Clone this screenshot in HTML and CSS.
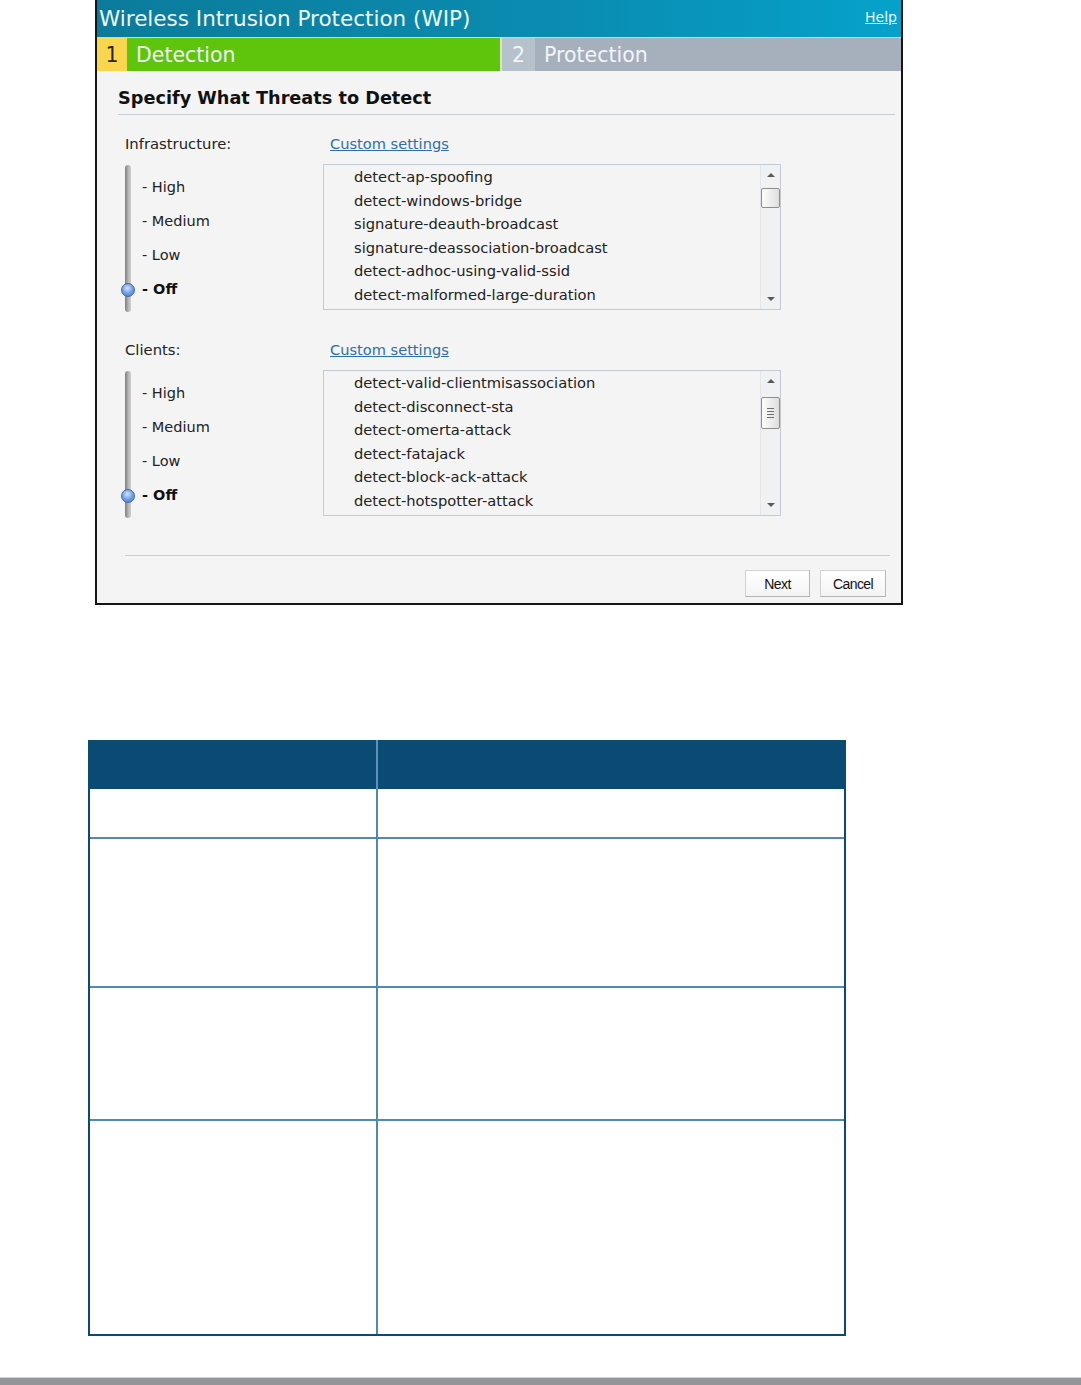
FILE: index.html
```html
<!DOCTYPE html>
<html lang="en">
<head>
    <meta charset="UTF-8">
    <title>Wireless Intrusion Protection (WIP)</title>
    <link rel="stylesheet" href="styles.css">
</head>
<body>
    <div class="dialog">
        <div class="titleBar">
            <span class="title">Wireless Intrusion Protection (WIP)</span>
            <a class="help" href="#">Help</a>
        </div>
        <div class="steps">
            <div class="step current"><span class="num">1</span><span class="name">Detection</span></div>
            <div class="step"><span class="num">2</span><span class="name">Protection</span></div>
        </div>
        <div class="content">
            <h2>Specify What Threats to Detect</h2>

            <div class="group">
                <div class="groupLabel">Infrastructure:</div>
                <div class="linkCell"><a class="custom" href="#">Custom settings</a></div>
                <div class="slider">
                    <div class="track"><span class="knob"></span></div>
                    <ul class="levels">
                        <li>- High</li>
                        <li>- Medium</li>
                        <li>- Low</li>
                        <li class="sel">- Off</li>
                    </ul>
                </div>
                <div class="listBox">
                    <ul class="items">
                        <li>detect-ap-spoofing</li>
                        <li>detect-windows-bridge</li>
                        <li>signature-deauth-broadcast</li>
                        <li>signature-deassociation-broadcast</li>
                        <li>detect-adhoc-using-valid-ssid</li>
                        <li>detect-malformed-large-duration</li>
                    </ul>
                    <div class="scroll">
                        <span class="arrow up"></span>
                        <div class="scrollTrack"><span class="thumb small"></span></div>
                        <span class="arrow down"></span>
                    </div>
                </div>
            </div>

            <div class="group second">
                <div class="groupLabel">Clients:</div>
                <div class="linkCell"><a class="custom" href="#">Custom settings</a></div>
                <div class="slider">
                    <div class="track"><span class="knob"></span></div>
                    <ul class="levels">
                        <li>- High</li>
                        <li>- Medium</li>
                        <li>- Low</li>
                        <li class="sel">- Off</li>
                    </ul>
                </div>
                <div class="listBox">
                    <ul class="items">
                        <li>detect-valid-clientmisassociation</li>
                        <li>detect-disconnect-sta</li>
                        <li>detect-omerta-attack</li>
                        <li>detect-fatajack</li>
                        <li>detect-block-ack-attack</li>
                        <li>detect-hotspotter-attack</li>
                    </ul>
                    <div class="scroll">
                        <span class="arrow up"></span>
                        <div class="scrollTrack"><span class="thumb big"><i></i><i></i><i></i><i></i></span></div>
                        <span class="arrow down"></span>
                    </div>
                </div>
            </div>

            <div class="buttons">
                <button>Next</button>
                <button>Cancel</button>
            </div>
        </div>
    </div>

    <div class="table">
        <div class="cell head"></div>
        <div class="cell head right"></div>
        <div class="cell"></div>
        <div class="cell right"></div>
        <div class="cell line"></div>
        <div class="cell line right"></div>
        <div class="cell line"></div>
        <div class="cell line right"></div>
        <div class="cell line"></div>
        <div class="cell line right"></div>
    </div>

    <div class="pageBar"></div>
</body>
</html>
```

FILE: styles.css
```css
* {
    box-sizing: border-box;
}
body {
    margin: 0;
    background-color: #fff;
    font-family: "DejaVu Sans", Verdana, sans-serif;
    color: #222;
}
ul {
    margin: 0;
    padding: 0;
    list-style: none;
}

/* dialog */
.dialog {
    margin-left: 95px;
    width: 808px;
    border: 2px solid #151515;
    border-top: 0;
    background-color: #f4f4f4;
}
.titleBar {
    height: 38px;
    display: flex;
    align-items: center;
    justify-content: space-between;
    padding: 0 4px 1px 2px;
    background: linear-gradient(to right, #0c7b9b, #0a8db2 60%, #05a2cb);
    border-bottom: 1px solid #c9d4dc;
}
.title {
    color: #eef6f9;
    font-size: 21.5px;
}
.help {
    color: #e8f6fb;
    font-size: 14px;
    margin-top: -2px;
}
.steps {
    display: flex;
    height: 33px;
}
.step {
    display: flex;
    align-items: center;
    color: #f2f5f8;
    font-size: 20.5px;
    background-color: #a5b0bc;
    flex: 1;
}
.step.current {
    flex: 0 0 405px;
    background-color: #5ec40c;
    border-right: 2px solid #d4e7b4;
}
.step .num {
    width: 33px;
    height: 100%;
    display: flex;
    align-items: center;
    justify-content: center;
    background-color: #b6c1cc;
}
.step.current .num {
    width: 30px;
    color: #2a2410;
    background-color: #fad64e;
}
.step .name {
    padding-left: 9px;
}

.content {
    padding-top: 16px;
}
h2 {
    margin: 0 6px 0 21px;
    padding-bottom: 5px;
    font-size: 17.7px;
    line-height: 22px;
    color: #111;
    border-bottom: 1px solid #c5cdd8;
}

/* threat groups */
.group {
    display: grid;
    grid-template-columns: 198px 458px;
    row-gap: 11px;
    margin: 20px 0 0 28px;
}
.group.second {
    margin-top: 29px;
}
.groupLabel {
    font-size: 14.8px;
    line-height: 18px;
}
.linkCell {
    padding-left: 7px;
    line-height: 18px;
}
.custom {
    font-size: 14.6px;
    color: #2b6fab;
}
.slider {
    display: flex;
    margin-top: 1px;
}
.track {
    position: relative;
    width: 6px;
    height: 147px;
    border-radius: 3px;
    background: linear-gradient(to right, #7d7d7d, #b8b8b8 60%, #d0d0d0);
}
.knob {
    position: absolute;
    left: -4px;
    top: 118px;
    width: 14px;
    height: 14px;
    border-radius: 50%;
    border: 1px solid #3d68b8;
    background: radial-gradient(circle at 45% 35%, #d6e6fb, #7aa6ea 45%, #3c6fcf 100%);
}
.levels {
    padding: 5px 0 0 11px;
}
.levels li {
    font-size: 14.5px;
    line-height: 34px;
}
.levels li.sel {
    font-weight: bold;
    color: #111;
}

.listBox {
    display: flex;
    height: 146px;
    border: 1px solid #c3cbd5;
    background-color: #f4f4f4;
}
.items {
    flex: 1;
    padding-left: 30px;
}
.items li {
    font-size: 14.7px;
    line-height: 23.5px;
}
.scroll {
    width: 20px;
    display: flex;
    flex-direction: column;
    border-left: 1px solid #e2e6ea;
    background-color: #eff1f3;
}
.arrow {
    height: 20px;
    display: flex;
    align-items: center;
    justify-content: center;
}
.arrow::before {
    content: "";
    border-left: 4px solid transparent;
    border-right: 4px solid transparent;
}
.arrow.up::before {
    border-bottom: 4px solid #5a5a5a;
}
.arrow.down::before {
    border-top: 4px solid #5a5a5a;
}
.scrollTrack {
    flex: 1;
    padding: 3px 0 0 0;
}
.thumb {
    display: flex;
    flex-direction: column;
    align-items: center;
    justify-content: center;
    gap: 2px;
    height: 20px;
    border: 1px solid #8d8d8d;
    border-radius: 2px;
    background: linear-gradient(to right, #fdfdfd, #dedede);
}
.thumb.big {
    height: 32px;
    margin-top: 3px;
}
.thumb i {
    width: 7px;
    height: 1px;
    background-color: #6f6f6f;
}

.buttons {
    display: flex;
    justify-content: flex-end;
    gap: 10px;
    margin: 37px 11px 0 28px;
    padding: 14px 4px 6px 0;
    border-top: 1px solid #c5cdd8;
}
.buttons button {
    height: 27px;
    width: 65px;
    padding: 0;
    font-family: "Liberation Sans", Arial, sans-serif;
    font-size: 14px;
    letter-spacing: -0.6px;
    color: #111;
    border: 1px solid #d2d2d2;
    border-right-color: #b9b9b9;
    border-bottom-color: #b4b4b4;
    background: linear-gradient(#ffffff, #f4f4f4);
}
.buttons button + button {
    width: 66px;
}

/* parameter table */
.table {
    display: grid;
    grid-template-columns: 286px 1fr;
    grid-template-rows: 49px 48px 149px 133px 215px;
    margin: 135px 0 0 88px;
    width: 758px;
    border: 2px solid #0a4a73;
    border-top: 0;
}
.cell.head {
    background-color: #0a4a73;
}
.cell.right {
    border-left: 2px solid #4f8ab2;
}
.cell.head.right {
    border-left-color: #5b92bb;
}
.cell.line {
    border-top: 2px solid #4f8ab2;
}

.pageBar {
    margin-top: 41px;
    height: 8px;
    border-top: 1px solid #d4d4d4;
    background-color: #939598;
}
```
